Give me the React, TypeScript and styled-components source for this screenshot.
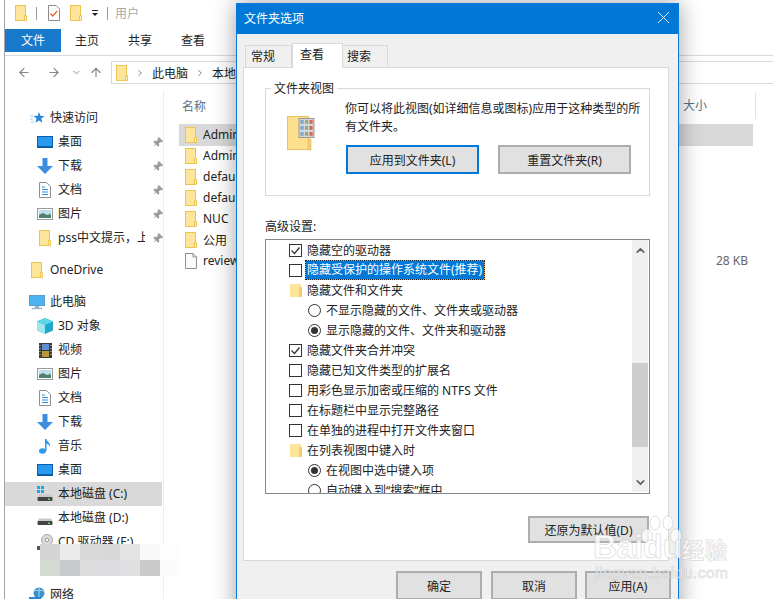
import React from "react";
import styled, { createGlobalStyle } from "styled-components";
import { ArrowLeft, ArrowRight, ArrowUp, ChevronDown, ChevronRight, ChevronUp, X, Pin } from "lucide-react";

const Global = createGlobalStyle`
  html, body { margin: 0; padding: 0; background: #fff; }
  * { box-sizing: border-box; }
  body { font-family: "Noto Sans", "Noto Sans CJK SC", sans-serif; font-size: 12px; color: #1c1c1c; }
`;

const Root = styled.div`
  position: relative;
  width: 773px;
  height: 599px;
  overflow: hidden;
  background: #fff;
`;

/* ---------- icons ---------- */
const FolderIcon = ({ h = 16 }: { h?: number }) => (
  <svg width="12" height={h} viewBox="0 0 12 16" preserveAspectRatio="none" style={{ flex: "none" }}>
    <rect x="0.5" y="0.5" width="10" height="15" fill="#fde59c" stroke="#eac552" />
    <path d="M9.5 10.5h2v5h-2z" fill="#fff3c4" stroke="#eac552" />
  </svg>
);
const SoftFolder = () => (
  <svg width="12" height="13" viewBox="0 0 12 13" style={{ flex: "none" }}>
    <rect width="11" height="13" fill="#fde59c" />
    <rect x="9" y="3" width="3" height="10" fill="#f6cf63" />
  </svg>
);
const StarIcon = () => (
  <svg width="15" height="14" viewBox="0 0 15 14">
    <path d="M9 1l1.4 3.8 4.2.2-3.3 2.6 1.1 4.2L9 9.5l-3.6 2.3 1.2-4.2L3.5 5l4.2-.2z" fill="#2a84d8" />
    <path d="M0 5h3M0 8h3M1 11h3" stroke="#9fcdf2" />
  </svg>
);
const DesktopIcon = () => (
  <svg width="16" height="12" viewBox="0 0 16 12">
    <rect width="16" height="12" fill="#0a5ea8" />
    <rect x="1" y="1" width="14" height="9" fill="#2a9af0" />
  </svg>
);
const DownIcon = () => (
  <svg width="16" height="16" viewBox="0 0 16 16">
    <path d="M5.5 0h5v8H16l-8 8-8-8h5.5z" fill="#3c8fe0" />
  </svg>
);
const DocIcon = () => (
  <svg width="12" height="16" viewBox="0 0 12 16">
    <path d="M.5.5h7l4 4v11H.5z" fill="#fff" stroke="#8f8f8f" />
    <path d="M3 5h3M3 7.5h6M3 10h6M3 12.5h6" stroke="#2f8fdc" />
  </svg>
);
const PicIcon = () => (
  <svg width="16" height="12" viewBox="0 0 16 12">
    <rect x=".5" y=".5" width="15" height="11" fill="#fff" stroke="#9a9a9a" />
    <rect x="2" y="2" width="12" height="8" fill="#bcdcec" />
    <path d="M2 7l4-2 4 2 4-1v4H2z" fill="#4e7f6c" />
  </svg>
);
const MonitorIcon = () => (
  <svg width="16" height="15" viewBox="0 0 16 15">
    <rect width="16" height="11" fill="#5c9ccc" />
    <rect x="1" y="1" width="14" height="9" fill="#4db4f2" />
    <path d="M6 11h4v2H6z" fill="#8fb5cf" />
    <path d="M3 13.5h10" stroke="#9bb6c8" strokeWidth="1.4" />
  </svg>
);
const CubeIcon = () => (
  <svg width="16" height="16" viewBox="0 0 16 16">
    <path d="M8 0l8 3.5v9L8 16 0 12.5v-9z" fill="#1fa8c9" />
    <path d="M0 3.5L8 7v9L0 12.5z" fill="#9ce8ee" />
    <path d="M8 0l8 3.5L8 7 0 3.5z" fill="#5fd6e4" />
  </svg>
);
const FilmIcon = () => (
  <svg width="13" height="15" viewBox="0 0 13 15">
    <rect width="13" height="15" fill="#3a3a3a" />
    <rect x="3" y="1" width="7" height="6" fill="#5f8fd0" />
    <rect x="3" y="8" width="7" height="6" fill="#b69a3a" />
    <path d="M1 2v1M1 5v1M1 8v1M1 11v1M12 2v1M12 5v1M12 8v1M12 11v1" stroke="#ddd" />
  </svg>
);
const NoteIcon = () => (
  <svg width="12" height="16" viewBox="0 0 12 16">
    <ellipse cx="3.5" cy="13" rx="3.5" ry="2.8" fill="#2a9af0" />
    <path d="M6 1h1.5c.5 3 4.5 3.5 3.5 8-.8-2.5-2-3-3.5-3.300V13H6z" fill="#2a9af0" />
  </svg>
);
const DiskIcon = ({ win }: { win?: boolean }) => (
  <svg width="16" height="16" viewBox="0 0 16 16">
    {win && <path d="M0 0h3v3H0zM4 0h3v3H4zM0 4h3v3H0zM4 4h3v3H4z" fill="#19a7ec" />}
    <path d="M2 8.5h12l1.5 2.5H.5z" fill="#c9c9c9" />
    <rect x=".5" y="11" width="15" height="4" rx="1" fill="#444" />
    <rect x="11" y="12.5" width="2" height="1.5" fill="#5ed25e" />
  </svg>
);
const CdIcon = () => (
  <svg width="16" height="16" viewBox="0 0 16 16">
    <circle cx="10" cy="6" r="5.5" fill="#dcdcdc" stroke="#a8a8a8" />
    <circle cx="10" cy="6" r="1.8" fill="#fff" stroke="#999" />
    <rect x="0" y="12" width="15" height="4" fill="#555" />
  </svg>
);
const NetIcon = () => (
  <svg width="16" height="16" viewBox="0 0 16 16">
    <circle cx="10" cy="6" r="5.5" fill="#3c92c8" />
    <path d="M5 4c3-1 6-1 10 0M10 .5v11" stroke="#a8d8ef" fill="none" />
    <rect x="0" y="10" width="12" height="5" fill="#2a86d0" />
  </svg>
);
const FileIcon = () => (
  <svg width="12" height="16" viewBox="0 0 12 16">
    <path d="M.5.5H8L11.5 4v11.5H.5z" fill="#fafafa" stroke="#8f8f8f" />
    <path d="M8 .5V4h3.500" fill="none" stroke="#8f8f8f" />
  </svg>
);
const CheckDocIcon = () => (
  <svg width="12" height="16" viewBox="0 0 12 16">
    <path d="M.5.5H8L11.5 4v11.5H.5z" fill="#fff" stroke="#8a8a8a" />
    <path d="M2.500 8.500l2.200 2.500 4.500-5" fill="none" stroke="#e8622c" strokeWidth="1.3" />
  </svg>
);
const ViewFolderIcon = () => (
  <svg width="28" height="36" viewBox="0 0 28 36" style={{ flex: "none" }}>
    <rect x="0.5" y="1.5" width="21" height="33" fill="#fddf8c" stroke="#e3c268" />
    <rect x="21" y="24" width="3" height="11" fill="#f2cf6e" stroke="#d9b95f" strokeWidth=".6" />
    <rect x="12" y="3.5" width="15" height="19" fill="#d6d6d6" stroke="#999" />
    {[5, 11, 17].map((y) =>
      [13.5, 18, 22.5].map((x, i) => (
        <rect key={`${x}-${y}`} x={x} y={y} width="3.2" height="3.8" fill={["#7fa6cf", "#8fae80", "#cf6a50"][i]} />
      ))
    )}
  </svg>
);

/* ---------- explorer shell ---------- */
const Explorer = styled.div`
  margin-left: 4px;
  height: 599px;
  border-left: 1px solid #a3a3a3;
  display: flex;
  flex-direction: column;
`;
const QuickBar = styled.div`
  height: 26px;
  display: flex;
  align-items: center;
  padding-left: 10px;
`;
const Slot = styled.span<{ $ml: number }>`
  display: inline-flex;
  margin-left: ${(p) => p.$ml}px;
`;
const BarSep = styled.span<{ $ml: number }>`
  width: 1px;
  height: 13px;
  background: #9a9a9a;
  margin-left: ${(p) => p.$ml}px;
`;
const DropGlyph = styled.span`
  display: flex;
  flex-direction: column;
  align-items: center;
  gap: 2px;
  width: 8px;
  &::before { content: ""; width: 6px; height: 1px; background: #222; }
  &::after { content: ""; border: 3px solid transparent; border-top-color: #222; border-bottom: 0; }
`;
const CrumbTitle = styled.span`
  margin-left: 7px;
  color: #a8a8a8;
`;
const RibbonTabs = styled.div`
  height: 30px;
  border-bottom: 1px solid #dadada;
  display: flex;
  align-items: flex-start;
  padding-top: 3px;
`;
const RibbonTab = styled.div<{ $w: number; $active?: boolean }>`
  width: ${(p) => p.$w}px;
  height: 23px;
  line-height: 23px;
  text-align: center;
  background: ${(p) => (p.$active ? "#1979ca" : "transparent")};
  color: ${(p) => (p.$active ? "#fff" : "#222")};
`;
const AddressRow = styled.div`
  height: 28px;
  padding-top: 5px;
  padding-left: 12px;
  display: flex;
  align-items: stretch;
`;
const NavButtons = styled.div`
  width: 94px;
  display: flex;
  align-items: center;
  color: #858585;
`;
const NavSlot = styled.span<{ $w: number }>`
  width: ${(p) => p.$w}px;
  display: inline-flex;
  justify-content: center;
`;
const AddressBox = styled.div`
  flex: 1;
  height: 23px;
  border: 1px solid #d9d9d9;
  border-right: 0;
  display: flex;
  align-items: center;
  padding-left: 4px;
  gap: 7px;
  color: #222;
  svg { flex: none; }
`;
const Main = styled.div`
  flex: 1;
  display: flex;
  min-height: 0;
`;
const NavPane = styled.nav`
  width: 159px;
  margin-top: 7px;
  padding-top: 15px;
  border-right: 1px solid #eeeeee;
  flex: none;
`;
const NavRow = styled.div<{ $indent: number; $selected?: boolean; $gap?: number }>`
  height: 24px;
  width: 157px;
  display: flex;
  align-items: center;
  gap: 5px;
  padding-left: ${(p) => p.$indent}px;
  margin-top: ${(p) => p.$gap ?? 0}px;
  background: ${(p) => (p.$selected ? "#d9d9d9" : "transparent")};
  color: #222;
  position: relative;
`;
const NavIcon = styled.span`
  width: 16px;
  height: 16px;
  flex: none;
  display: flex;
  align-items: center;
  justify-content: center;
`;
const NavText = styled.span`
  white-space: nowrap;
  overflow: hidden;
  width: 87px;
  flex: none;
  line-height: 18px;
`;
const NavPin = styled.span`
  color: #9a9a9a;
  display: flex;
  margin-left: 2px;
  svg { transform: rotate(45deg); fill: #9a9a9a; }
`;
const Files = styled.section`
  flex: 1;
  padding: 9px 0 0 15px;
  position: relative;
`;
const FileGrid = styled.div<{ $selected?: boolean }>`
  width: 574px;
  display: grid;
  grid-template-columns: 501px 73px;
  align-items: center;
  height: 21px;
  background: ${(p) => (p.$selected ? "#d9d9d9" : "transparent")};
  box-shadow: ${(p) => (p.$selected ? "0 1px 0 #d9d9d9" : "none")};
`;
const HeaderGrid = styled.div`
  width: 577px;
  height: 22px;
  margin-bottom: 9px;
  display: grid;
  grid-template-columns: 501px 76px;
  align-items: center;
  color: #5a6f86;
`;
const HeadName = styled.span`
  padding-left: 3px;
`;
const HeadSize = styled.span`
  padding-left: 3px;
  height: 26px;
  line-height: 26px;
  border-right: 1px solid #e3e3e3;
`;
const FileName = styled.span`
  display: flex;
  align-items: center;
  gap: 6px;
  padding-left: 6px;
  white-space: nowrap;
  color: #222;
`;
const FileSize = styled.span`
  text-align: right;
  padding-right: 5px;
  color: #666;
`;
const Mosaic = styled.div`
  position: absolute;
  left: 40px;
  top: 544px;
  display: grid;
  grid-template-columns: repeat(7, 20px);
  grid-auto-rows: 16px;
`;
const MosaicCell = styled.span<{ $c: string }>`
  background: ${(p) => p.$c};
`;

/* ---------- dialog ---------- */
const Dialog = styled.div`
  position: absolute;
  left: 236px;
  top: 3px;
  width: 443px;
  height: 640px;
  background: #f0f0f0;
  border: 1px solid #0a7bdc;
  box-shadow: 0 0 22px rgba(0, 0, 0, 0.38);
`;
const DialogTitle = styled.div`
  height: 30px;
  background: #0078d7;
  color: #fff;
  display: flex;
  align-items: center;
  justify-content: space-between;
  padding: 0 4px 3px 7px;
  font-size: 12px;
`;
const TabStrip = styled.div`
  margin-top: 9px;
  height: 25px;
  padding-left: 8px;
  display: flex;
  align-items: flex-end;
  position: relative;
  z-index: 1;
`;
const DlgTab = styled.div<{ $w: number; $pad: number; $active?: boolean }>`
  width: ${(p) => p.$w}px;
  height: ${(p) => (p.$active ? 25 : 23)}px;
  background: ${(p) => (p.$active ? "#fff" : "#f0f0f0")};
  border: 1px solid #d9d9d9;
  border-bottom: ${(p) => (p.$active ? "0" : "1px solid #d9d9d9")};
  margin-left: ${(p) => (p.$active ? 0 : -1)}px;
  padding: ${(p) => (p.$active ? 0 : 1)}px 0 0 ${(p) => p.$pad}px;
  line-height: ${(p) => (p.$active ? 22 : 20)}px;
  color: #222;
  &:first-child { margin-left: 0; }
  z-index: ${(p) => (p.$active ? 2 : 0)};
`;
const TabPanel = styled.div`
  margin-left: 6px;
  margin-top: -1px;
  width: 426px;
  height: 494px;
  background: #fff;
  border: 1px solid #d9d9d9;
  padding: 12px 18px 0 21px;
  display: flex;
  flex-direction: column;
`;
const Group = styled.fieldset`
  margin: 0;
  padding: 3px 18px 21px 21px;
  border: 1px solid #d9d9d9;
  min-width: 0;
`;
const GroupLegend = styled.legend`
  margin-left: -16px;
  padding: 1px 3px 0;
  line-height: 16px;
  color: #222;
`;
const GroupBody = styled.div`
  display: flex;
  gap: 30px;
`;
const GroupIcon = styled.div`
  padding-top: 15px;
`;
const GroupText = styled.p`
  margin: 0;
  line-height: 18px;
  width: 300px;
  color: #222;
`;
const GroupActions = styled.div`
  display: flex;
  gap: 19px;
  margin-top: 9px;
  margin-left: 1px;
`;
const Btn = styled.div<{ $w: number; $h?: number; $focus?: boolean; $mr?: number }>`
  width: ${(p) => p.$w}px;
  height: ${(p) => p.$h ?? 29}px;
  margin-right: ${(p) => p.$mr ?? 0}px;
  background: #e1e1e1;
  border: 2px solid ${(p) => (p.$focus ? "#0078d7" : "#adadad")};
  display: flex;
  align-items: center;
  justify-content: center;
  color: #222;
  flex: none;
  white-space: nowrap;
`;
const AdvLabel = styled.div`
  margin-top: 22px;
  line-height: 18px;
  color: #222;
`;
const ListBox = styled.div`
  margin-top: 3px;
  height: 255px;
  width: 385px;
  border: 1px solid #828790;
  display: flex;
  overflow: hidden;
  flex: none;
`;
const ListItems = styled.div`
  flex: 1;
  overflow: hidden;
`;
const ListRow = styled.div<{ $indent: number }>`
  height: 20px;
  display: flex;
  align-items: center;
  gap: 5px;
  padding-left: ${(p) => p.$indent}px;
  white-space: nowrap;
  color: #222;
`;
const Box = styled.span`
  width: 13px;
  height: 13px;
  border: 1px solid #333;
  background: #fff;
  flex: none;
  display: flex;
  align-items: center;
  justify-content: center;
`;
const Radio = styled.span<{ $on?: boolean }>`
  width: 13px;
  height: 13px;
  border: 1px solid #333;
  border-radius: 50%;
  background: #fff;
  flex: none;
  display: flex;
  align-items: center;
  justify-content: center;
  &::after {
    content: "";
    width: 7px;
    height: 7px;
    border-radius: 50%;
    background: ${(p) => (p.$on ? "#333" : "transparent")};
  }
`;
const FocusText = styled.span`
  background: #0078d7;
  color: #fff;
  padding: 1px 2px 1px 1px;
  margin-left: -1px;
  line-height: 16px;
  outline: 1px dotted #222;
  box-shadow: 0 0 0 1px #f5a13a;
`;
const ScrollBar = styled.div`
  width: 16px;
  margin-right: 1px;
  margin-bottom: 1px;
  background: #f0f0f0;
  display: flex;
  flex-direction: column;
  align-items: center;
  color: #606060;
  flex: none;
`;
const ScrollArrow = styled.div`
  height: 20px;
  display: flex;
  align-items: center;
  justify-content: center;
`;
const ScrollThumb = styled.div`
  width: 100%;
  height: 84px;
  margin-top: 103px;
  margin-bottom: auto;
  background: #cdcdcd;
`;
const RestoreRow = styled.div`
  margin-top: 22px;
  display: flex;
  justify-content: flex-end;
  width: 384px;
`;
const Footer = styled.div`
  margin-top: 10px;
  padding-right: 7px;
  display: flex;
  justify-content: flex-end;
  gap: 8px;
`;

/* ---------- watermark ---------- */
const Watermark = styled.div`
  position: absolute;
  left: 590px;
  top: 512px;
  width: 150px;
  height: 72px;
  color: rgba(255, 255, 255, 0.78);
  -webkit-text-stroke: 1px rgba(175, 175, 175, 0.36);
  pointer-events: none;
`;
const WmPaw = styled.svg`
  position: absolute;
  left: 47px;
  top: 3px;
`;
const WmBrand = styled.span`
  position: absolute;
  left: 3px;
  top: 17px;
  font: 700 33px/36px "Liberation Sans", sans-serif;
  letter-spacing: -0.5px;
`;
const WmCn = styled.span`
  position: absolute;
  left: 92px;
  top: 22px;
  font: 700 22px/28px "Noto Sans CJK SC", sans-serif;
  letter-spacing: 1px;
`;
const WmUrl = styled.span`
  position: absolute;
  left: 5px;
  top: 51px;
  font: 400 15.5px/20px "Liberation Sans", sans-serif;
  letter-spacing: 0.5px;
  white-space: nowrap;
`;

/* ---------- data ---------- */
const PIN = (
  <NavPin>
    <Pin size={11} strokeWidth={1.5} />
  </NavPin>
);
type Nav = { label: string; icon: React.ReactNode; indent: number; pin?: boolean; selected?: boolean; gap?: number };
const navItems: Nav[] = [
  { label: "快速访问", icon: <StarIcon />, indent: 24 },
  { label: "桌面", icon: <DesktopIcon />, indent: 32, pin: true },
  { label: "下载", icon: <DownIcon />, indent: 32, pin: true },
  { label: "文档", icon: <DocIcon />, indent: 32, pin: true },
  { label: "图片", icon: <PicIcon />, indent: 32, pin: true },
  { label: "pss中文提示，上传", icon: <FolderIcon />, indent: 32, pin: true },
  { label: "OneDrive", icon: <FolderIcon />, indent: 24, gap: 8 },
  { label: "此电脑", icon: <MonitorIcon />, indent: 24, gap: 8 },
  { label: "3D 对象", icon: <CubeIcon />, indent: 32 },
  { label: "视频", icon: <FilmIcon />, indent: 32 },
  { label: "图片", icon: <PicIcon />, indent: 32 },
  { label: "文档", icon: <DocIcon />, indent: 32 },
  { label: "下载", icon: <DownIcon />, indent: 32 },
  { label: "音乐", icon: <NoteIcon />, indent: 32 },
  { label: "桌面", icon: <DesktopIcon />, indent: 32 },
  { label: "本地磁盘 (C:)", icon: <DiskIcon win />, indent: 32, selected: true },
  { label: "本地磁盘 (D:)", icon: <DiskIcon />, indent: 32 },
  { label: "CD 驱动器 (F:)", icon: <CdIcon />, indent: 32 },
  { label: "", icon: null, indent: 32 },
  { label: "网络", icon: <NetIcon />, indent: 24, gap: 5 },
];
const files = ["Administrator", "Administrator", "default", "default", "NUC", "公用"];
const mosaic = [
  "#d4d4d4", "#ebebeb", "#d9d9d9", "#d8d8d8", "#e3e3e3", "#f8f8f8", "#fdfdfd",
  "#d3dbd3", "#c8c9cb", "#dcdcdc", "#dcdde0", "#e0e0e0", "#cacaca", "#fbfbfb",
];
type Adv =
  | { kind: "check"; on?: boolean; label: string }
  | { kind: "focus"; label: string }
  | { kind: "folder"; label: string }
  | { kind: "radio"; on?: boolean; label: string };
const advanced: Adv[] = [
  { kind: "check", on: true, label: "隐藏空的驱动器" },
  { kind: "focus", label: "隐藏受保护的操作系统文件(推荐)" },
  { kind: "folder", label: "隐藏文件和文件夹" },
  { kind: "radio", label: "不显示隐藏的文件、文件夹或驱动器" },
  { kind: "radio", on: true, label: "显示隐藏的文件、文件夹和驱动器" },
  { kind: "check", on: true, label: "隐藏文件夹合并冲突" },
  { kind: "check", label: "隐藏已知文件类型的扩展名" },
  { kind: "check", label: "用彩色显示加密或压缩的 NTFS 文件" },
  { kind: "check", label: "在标题栏中显示完整路径" },
  { kind: "check", label: "在单独的进程中打开文件夹窗口" },
  { kind: "folder", label: "在列表视图中键入时" },
  { kind: "radio", on: true, label: "在视图中选中键入项" },
  { kind: "radio", label: "自动键入到“搜索”框中" },
];
const CheckMark = () => (
  <svg width="11" height="11" viewBox="0 0 11 11">
    <path d="M1.5 5.5l3 3 5-6" fill="none" stroke="#333" strokeWidth="1.3" />
  </svg>
);

export default function App() {
  return (
    <Root>
      <Global />
      <Explorer>
        <QuickBar>
          <Slot $ml={0}><FolderIcon /></Slot>
          <BarSep $ml={9} />
          <Slot $ml={11}><CheckDocIcon /></Slot>
          <Slot $ml={10}><FolderIcon /></Slot>
          <Slot $ml={9}><DropGlyph /></Slot>
          <BarSep $ml={8} />
          <CrumbTitle>用户</CrumbTitle>
        </QuickBar>
        <RibbonTabs>
          <RibbonTab $w={56} $active>文件</RibbonTab>
          <RibbonTab $w={52}>主页</RibbonTab>
          <RibbonTab $w={54}>共享</RibbonTab>
          <RibbonTab $w={52}>查看</RibbonTab>
        </RibbonTabs>
        <AddressRow>
          <NavButtons>
            <NavSlot $w={14}><ArrowLeft size={15} strokeWidth={2} /></NavSlot>
            <NavSlot $w={16} />
            <NavSlot $w={14}><ArrowRight size={15} strokeWidth={2} /></NavSlot>
            <NavSlot $w={8} />
            <NavSlot $w={14}><ChevronDown size={11} strokeWidth={2} /></NavSlot>
            <NavSlot $w={6} />
            <NavSlot $w={14}><ArrowUp size={15} strokeWidth={2} /></NavSlot>
          </NavButtons>
          <AddressBox>
            <FolderIcon />
            <ChevronRight size={10} strokeWidth={2} color="#666" />
            <span>此电脑</span>
            <ChevronRight size={10} strokeWidth={2} color="#666" />
            <span>本地磁盘 (C:)</span>
          </AddressBox>
        </AddressRow>
        <Main>
          <NavPane>
            {navItems.map((n, i) => (
              <NavRow key={i} $indent={n.indent} $selected={n.selected} $gap={n.gap}>
                <NavIcon>{n.icon}</NavIcon>
                <NavText>{n.label}</NavText>
                {n.pin && PIN}
              </NavRow>
            ))}
          </NavPane>
          <Files>
            <HeaderGrid>
              <HeadName>名称</HeadName>
              <HeadSize>大小</HeadSize>
            </HeaderGrid>
            {files.map((f, i) => (
              <FileGrid key={i} $selected={i === 0}>
                <FileName><FolderIcon />{f}</FileName>
                <FileSize />
              </FileGrid>
            ))}
            <FileGrid>
              <FileName><FileIcon />review.log</FileName>
              <FileSize>28 KB</FileSize>
            </FileGrid>
          </Files>
        </Main>
      </Explorer>

      <Mosaic>
        {mosaic.map((c, i) => <MosaicCell key={i} $c={c} />)}
      </Mosaic>

      <Dialog>
        <DialogTitle>
          文件夹选项
          <X size={21} strokeWidth={1} color="#fff" />
        </DialogTitle>
        <TabStrip>
          <DlgTab $w={47} $pad={5}>常规</DlgTab>
          <DlgTab $w={51} $pad={7} $active>查看</DlgTab>
          <DlgTab $w={46} $pad={4}>搜索</DlgTab>
        </TabStrip>
        <TabPanel>
          <Group>
            <GroupLegend>文件夹视图</GroupLegend>
            <GroupBody>
              <GroupIcon><ViewFolderIcon /></GroupIcon>
              <div>
                <GroupText>你可以将此视图(如详细信息或图标)应用于这种类型的所有文件夹。</GroupText>
                <GroupActions>
                  <Btn $w={133} $focus>应用到文件夹(L)</Btn>
                  <Btn $w={133}>重置文件夹(R)</Btn>
                </GroupActions>
              </div>
            </GroupBody>
          </Group>
          <AdvLabel>高级设置:</AdvLabel>
          <ListBox>
            <ListItems>
              {advanced.map((a, i) => {
                if (a.kind === "radio")
                  return (
                    <ListRow key={i} $indent={42}>
                      <Radio $on={a.on} />
                      {a.label}
                    </ListRow>
                  );
                if (a.kind === "folder")
                  return (
                    <ListRow key={i} $indent={24}>
                      <SoftFolder />
                      {a.label}
                    </ListRow>
                  );
                if (a.kind === "focus")
                  return (
                    <ListRow key={i} $indent={23}>
                      <Box />
                      <FocusText>{a.label}</FocusText>
                    </ListRow>
                  );
                return (
                  <ListRow key={i} $indent={23}>
                    <Box>{a.on && <CheckMark />}</Box>
                    {a.label}
                  </ListRow>
                );
              })}
            </ListItems>
            <ScrollBar>
              <ScrollArrow><ChevronUp size={13} strokeWidth={3} /></ScrollArrow>
              <ScrollThumb />
              <ScrollArrow><ChevronDown size={13} strokeWidth={3} /></ScrollArrow>
            </ScrollBar>
          </ListBox>
          <RestoreRow>
            <Btn $w={121} $h={27}>还原为默认值(D)</Btn>
          </RestoreRow>
        </TabPanel>
        <Footer>
          <Btn $w={86} $mr={1}>确定</Btn>
          <Btn $w={86}>取消</Btn>
          <Btn $w={86}>应用(A)</Btn>
        </Footer>
      </Dialog>

      <Watermark>
        <WmPaw width="46" height="44" viewBox="0 0 46 44" fill="rgba(255,255,255,.75)" stroke="rgba(175,175,175,.4)">
          <ellipse cx="10" cy="21" rx="5.5" ry="7" />
          <ellipse cx="18" cy="8" rx="5" ry="7" />
          <ellipse cx="31" cy="8" rx="5" ry="7" />
          <ellipse cx="39" cy="21" rx="5.5" ry="7" />
        </WmPaw>
        <WmBrand>Baidu</WmBrand>
        <WmCn>经验</WmCn>
        <WmUrl>jingyan.baidu.com</WmUrl>
      </Watermark>
    </Root>
  );
}
